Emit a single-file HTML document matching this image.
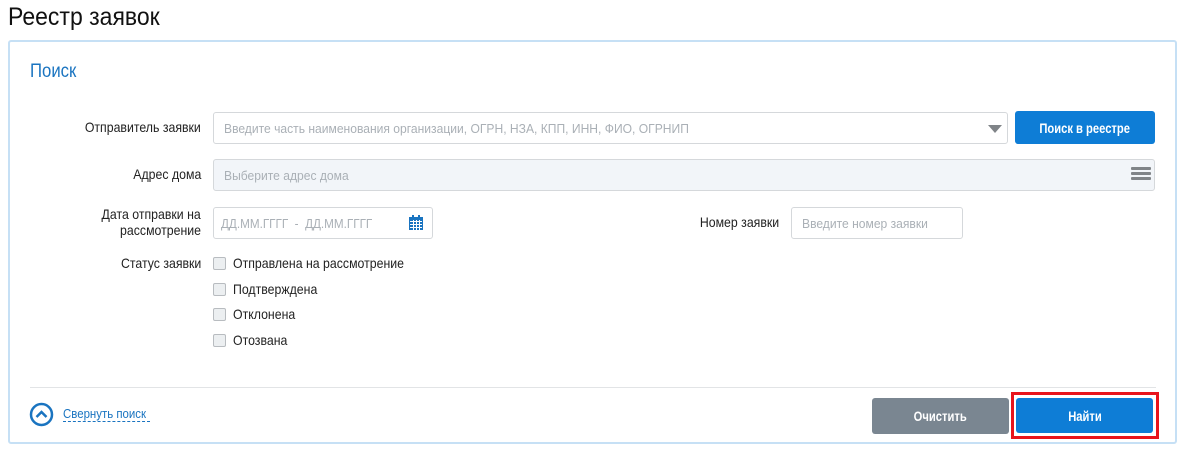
<!DOCTYPE html>
<html><head><meta charset="utf-8"><style>
*{box-sizing:border-box;margin:0;padding:0}
body{width:1188px;height:453px;background:#fff;font-family:"Liberation Sans",sans-serif;color:#222;position:relative;overflow:hidden}
.a{position:absolute}
.s{display:inline-block;transform:scaleX(.88);transform-origin:left center;white-space:nowrap}
.lbl{font-size:14px;text-align:right;color:#222}
.lbl .s{transform-origin:right center}
.inp{border:1px solid #d5d8db;border-radius:3px;background:#fff;font-size:13px;color:#aab0b6;padding-left:10px;display:flex;align-items:center}
.btn{color:#fff;font-weight:bold;font-size:14px;display:flex;align-items:center;justify-content:center;border-radius:3px}
.btn .s{transform:scaleX(.8);transform-origin:center}
.cb{width:13px;height:13px;border:1px solid #b8bcc0;border-radius:2px;background:#eceff1}
.ct{font-size:14px;color:#222}
</style></head><body>
<div class="a" style="left:8px;top:3px;font-size:25px;color:#111"><span class="s" style="transform:scaleX(.92)">Реестр заявок</span></div>
<div class="a" style="left:8px;top:40px;width:1169px;height:404px;border:2px solid #c6e0f5;border-radius:3px"></div>
<div class="a" style="left:30px;top:61px;font-size:19px;color:#1a74c0"><span class="s">Поиск</span></div>

<div class="a lbl" style="left:0;width:201px;top:119px"><span class="s">Отправитель заявки</span></div>
<div class="a inp" style="left:213px;top:112px;width:795px;height:32px"><span class="s" style="transform:scaleX(.93)">Введите часть наименования организации, ОГРН, НЗА, КПП, ИНН, ФИО, ОГРНИП</span></div>
<div class="a" style="left:988px;top:125px;width:0;height:0;border-left:7px solid transparent;border-right:7px solid transparent;border-top:8px solid #808488"></div>
<div class="a btn" style="left:1015px;top:111px;width:140px;height:33px;background:#0e7dd6"><span class="s">Поиск в реестре</span></div>

<div class="a lbl" style="left:0;width:201px;top:166px"><span class="s">Адрес дома</span></div>
<div class="a inp" style="left:213px;top:159px;width:942px;height:32px;background:#f2f5f9"><span class="s" style="transform:scaleX(.93)">Выберите адрес дома</span></div>
<div class="a" style="left:1131px;top:167px;width:20px;height:3px;background:#808488;border-radius:1px;box-shadow:0 5px 0 #808488,0 10px 0 #808488"></div>

<div class="a lbl" style="left:0;width:201px;top:206px;line-height:16px"><span class="s">Дата отправки на</span><br><span class="s">рассмотрение</span></div>
<div class="a inp" style="left:213px;top:207px;width:220px;height:32px;padding-left:7px"><span class="s" style="transform:scaleX(.9)">ДД.ММ.ГГГГ&nbsp; - &nbsp;ДД.ММ.ГГГГ</span></div>
<svg class="a" style="left:408px;top:214px" width="16" height="17" viewBox="0 0 16 17"><rect x="1" y="3" width="14" height="13" fill="#1a74c0"/><rect x="4" y="1" width="2" height="4" fill="#1a74c0"/><rect x="10" y="1" width="2" height="4" fill="#1a74c0"/><g fill="#fff"><rect x="2" y="7" width="12" height="1"/><rect x="2" y="10" width="12" height="1"/><rect x="2" y="13" width="12" height="1"/><rect x="5" y="6" width="1" height="10"/><rect x="8" y="6" width="1" height="10"/><rect x="11" y="6" width="1" height="10"/></g></svg>
<div class="a lbl" style="left:600px;width:179px;top:214px"><span class="s">Номер заявки</span></div>
<div class="a inp" style="left:791px;top:207px;width:172px;height:32px"><span class="s" style="transform:scaleX(.93)">Введите номер заявки</span></div>

<div class="a lbl" style="left:0;width:201px;top:255px"><span class="s">Статус заявки</span></div>
<div class="a cb" style="left:213px;top:257px"></div><div class="a ct" style="left:233px;top:255px"><span class="s">Отправлена на рассмотрение</span></div>
<div class="a cb" style="left:213px;top:283px"></div><div class="a ct" style="left:233px;top:281px"><span class="s">Подтверждена</span></div>
<div class="a cb" style="left:213px;top:308px"></div><div class="a ct" style="left:233px;top:306px"><span class="s">Отклонена</span></div>
<div class="a cb" style="left:213px;top:334px"></div><div class="a ct" style="left:233px;top:332px"><span class="s">Отозвана</span></div>

<div class="a" style="left:30px;top:387px;width:1126px;height:1px;background:#e2e4e6"></div>
<svg class="a" style="left:29px;top:402px" width="25" height="25" viewBox="0 0 25 25"><circle cx="12.5" cy="12.5" r="10.5" fill="none" stroke="#1a74c0" stroke-width="2.5"/><path d="M7.5 15 L12.5 10 L17.5 15" fill="none" stroke="#1a74c0" stroke-width="2.5"/></svg>
<div class="a" style="left:63px;top:406px;width:87px;font-size:13px;color:#1a74c0;border-bottom:1px dashed #1a74c0;line-height:15px"><span class="s">Свернуть поиск</span></div>
<div class="a btn" style="left:872px;top:398px;width:137px;height:36px;background:#7a8691"><span class="s">Очистить</span></div>
<div class="a" style="left:1011px;top:392px;width:148px;height:47px;border:3px solid #e8141c"></div>
<div class="a btn" style="left:1016px;top:398px;width:137px;height:35px;background:#0e7dd6"><span class="s">Найти</span></div>
</body></html>
